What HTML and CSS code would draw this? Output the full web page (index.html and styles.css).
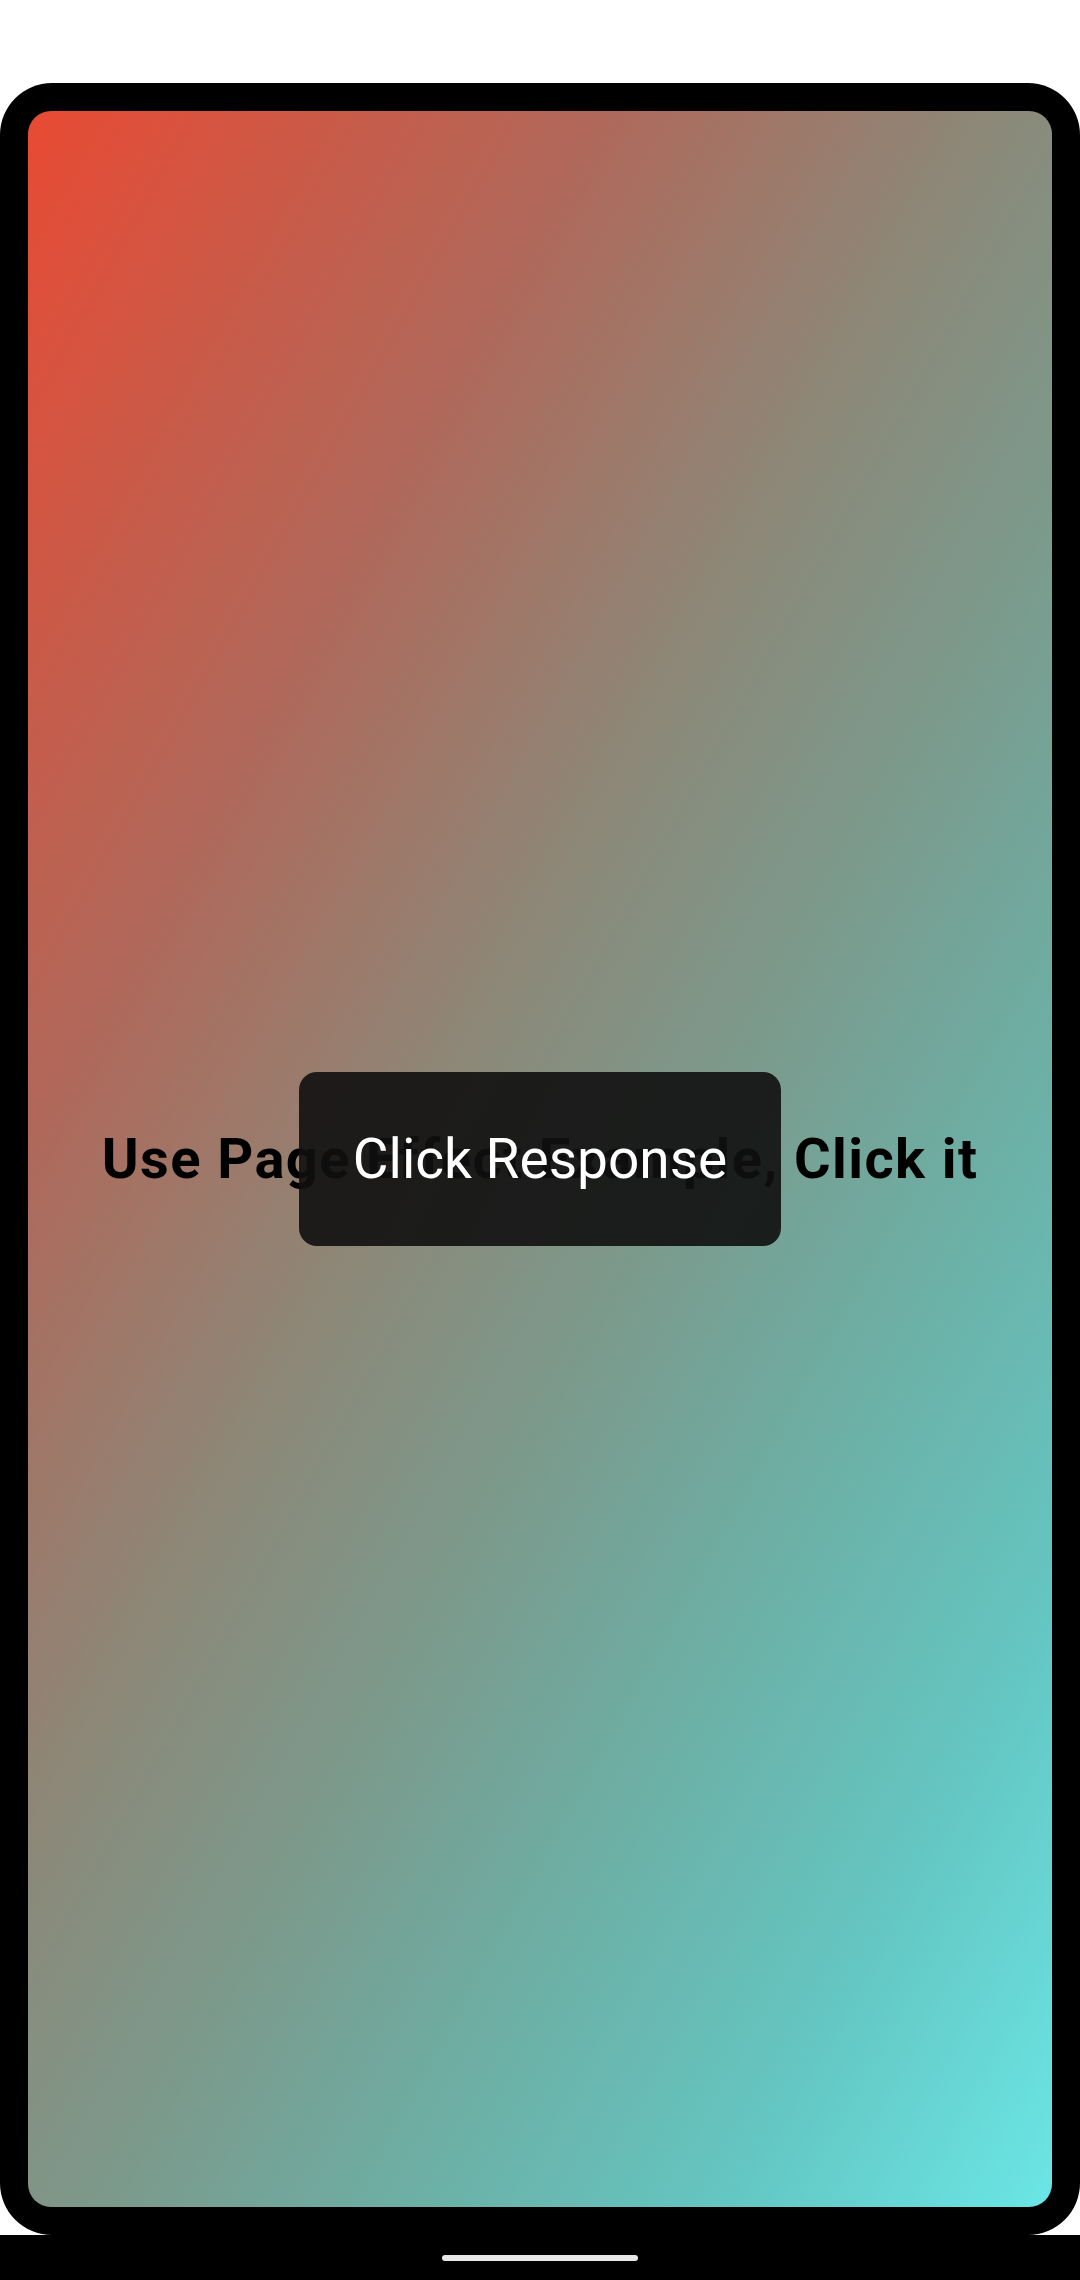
FILE: index.html
```html
<!DOCTYPE html>
<html lang="en">
<head>
<meta charset="utf-8">
<title>Page Effect</title>
<link rel="stylesheet" href="styles.css">
</head>
<body>
  <div class="status-space"></div>
  <div class="device">
    <div class="screen">
      <div class="title">Use Page Effect Example, Click it</div>
      <div class="toast">Click Response</div>
    </div>
  </div>
  <div class="nav-bar">
    <div class="handle"></div>
  </div>
</body>
</html>
```

FILE: styles.css
```css
html, body {
  margin: 0;
  padding: 0;
}

body {
  width: 1080px;
  height: 2280px;
  background: #ffffff;
  display: flex;
  flex-direction: column;
  overflow: hidden;
  font-family: Roboto, "Noto Sans", "Liberation Sans", sans-serif;
}

.status-space {
  height: 83px;
  flex: none;
}

.device {
  height: 2152px;
  flex: none;
  background: #000000;
  border-radius: 52px;
  padding: 28px;
  box-sizing: border-box;
  display: flex;
}

.screen {
  position: relative;
  flex: 1;
  border-radius: 23px;
  background: linear-gradient(119deg,
    #e84a33 0%,
    #b0685a 26%,
    #8c8878 44%,
    #7b9a8c 57%,
    #6cb0a6 71%,
    #64c6c2 85%,
    #6ae6e6 100%);
  display: flex;
  align-items: center;
  justify-content: center;
}

.title {
  font-size: 56px;
  font-weight: 700;
  letter-spacing: 1.4px;
  color: #000000;
  white-space: nowrap;
}

.toast {
  position: absolute;
  left: 50%;
  top: 50%;
  transform: translate(-50%, -50%);
  width: 482px;
  height: 174px;
  border-radius: 18px;
  background: rgba(16, 16, 16, 0.9);
  color: #ffffff;
  font-size: 55px;
  font-weight: 400;
  display: flex;
  align-items: center;
  justify-content: center;
  white-space: nowrap;
}

.nav-bar {
  flex: 1;
  background: #000000;
  display: flex;
  align-items: center;
  justify-content: center;
}

.handle {
  width: 196px;
  height: 6px;
  border-radius: 3px;
  background: #e8e8e8;
}
```
